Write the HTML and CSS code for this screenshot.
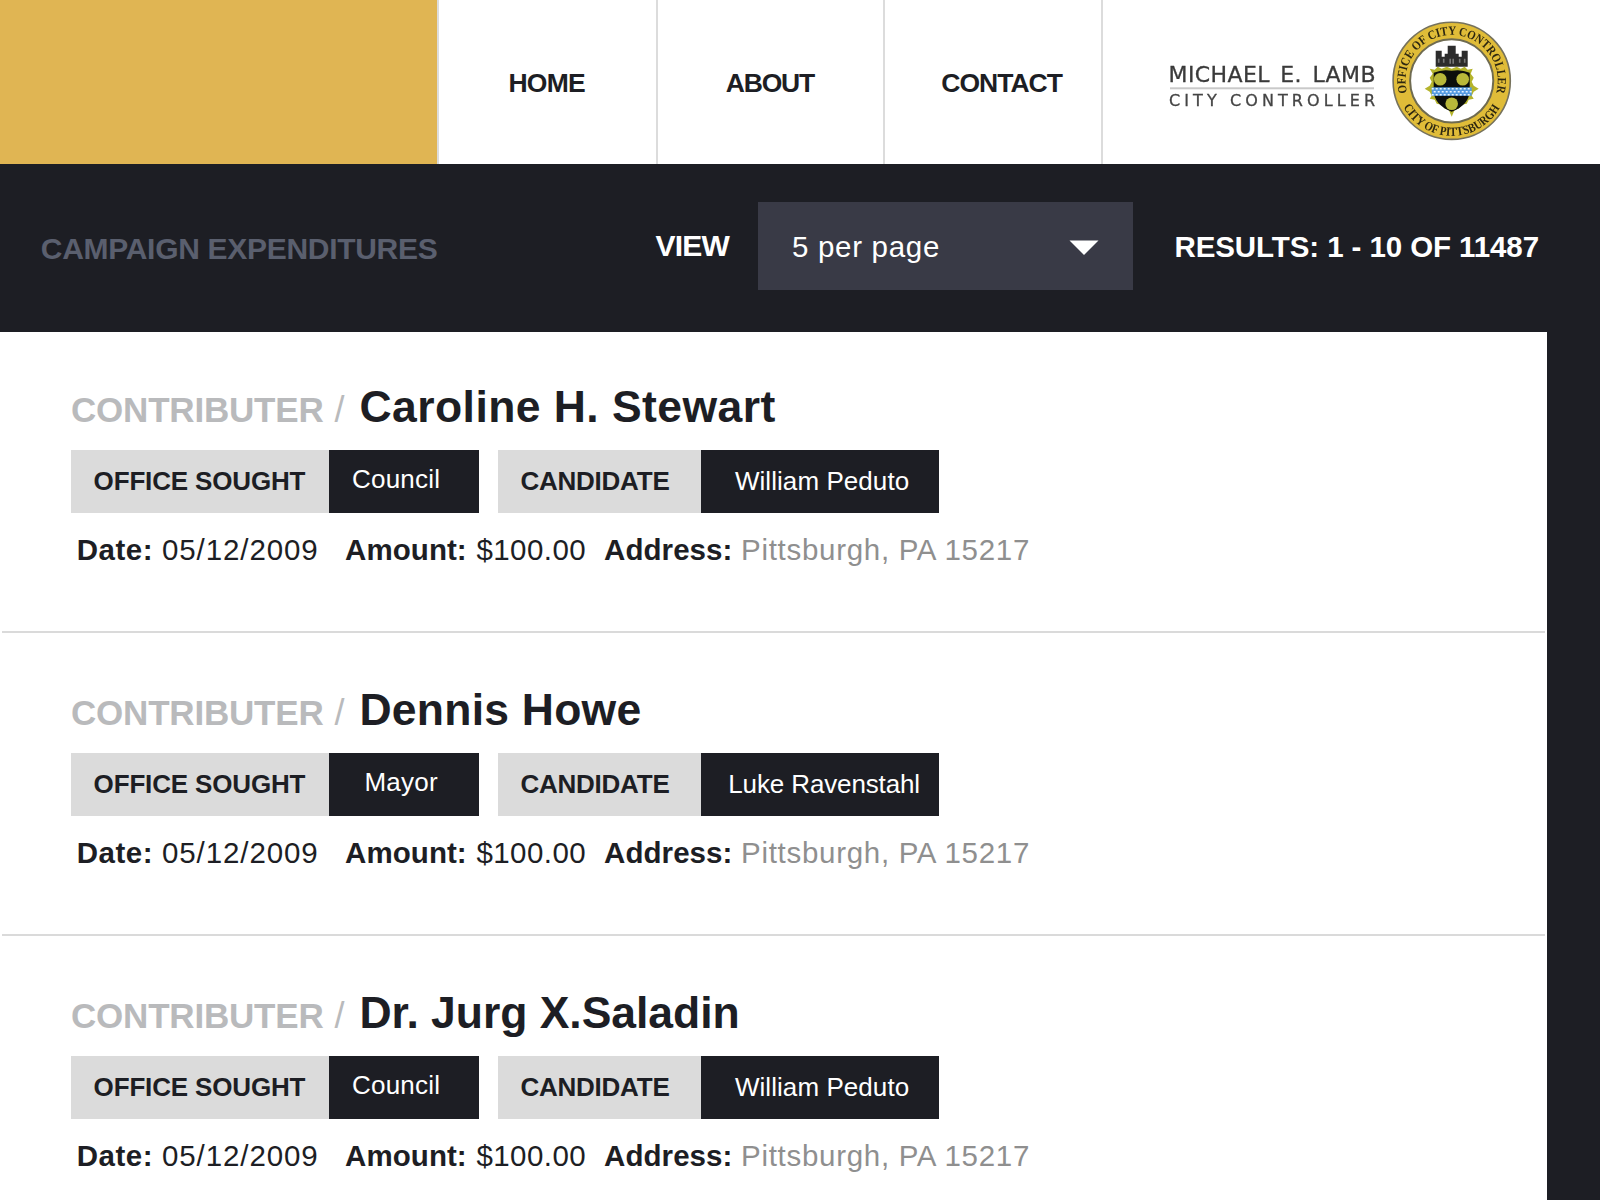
FILE: index.html
```html
<!DOCTYPE html>
<html lang="en">
<head>
<meta charset="utf-8">
<title>Campaign Expenditures</title>
<link rel="stylesheet" href="styles.css">
</head>
<body>
<header class="header">
  <div class="header-accent"></div>
  <nav class="nav">
    <a class="nav-item nav-home">HOME</a>
    <a class="nav-item nav-about">ABOUT</a>
    <a class="nav-item nav-contact">CONTACT</a>
  </nav>
  <div class="brand">
    <svg class="brand-logo" width="360" height="130" viewBox="0 0 360 130" role="img" aria-label="Michael E. Lamb, City Controller">
      <defs>
        <path id="arc-top" d="M 247.1 77.6 A 46.1 46.1 0 1 1 336.3 77.6"/>
        <path id="arc-bottom" d="M 243.300 92 A 55 55 0 0 0 340.100 92"/>
      </defs>
      <g class="brand-words">
        <text class="brand-name" x="8.5" y="67.2" textLength="207" lengthAdjust="spacing">MICHAEL E. LAMB</text>
        <rect x="10" y="72.300" width="204" height="2" fill="#c9c9c9"/>
        <text class="brand-role" x="9" y="91.200" textLength="206" lengthAdjust="spacing">CITY CONTROLLER</text>
      </g>
      <g class="brand-seal">
        <circle cx="291.700" cy="65.800" r="58.600" fill="#e0bc38" stroke="#76725c" stroke-width="1.600"/>
        <circle cx="291.700" cy="65.800" r="41.600" fill="#fff" stroke="#6f6b50" stroke-width="2"/>
        <text class="seal-text"><textPath href="#arc-top" textLength="168" lengthAdjust="spacingAndGlyphs">OFFICE OF CITY CONTROLLER</textPath></text>
        <text class="seal-text"><textPath href="#arc-bottom" textLength="117" lengthAdjust="spacingAndGlyphs">CITY OF PITTSBURGH</textPath></text>
        <g transform="translate(291.700 65.800)">
          <path d="M-16-30h6v6h3v-3h3v-8h8v8h3v3h3v-6h6v16h-32z" fill="#2c2c2c"/>
          <path d="M-8-18v-4M8-18v-4M-1.500-17v-5M1.500-17v-5M-13-18v-4M13-18v-4" stroke="#777" stroke-width="1.600"/>
          <path d="M-22-12l5 1 3-3 4 2 5-2 5 2 5-2 4 2 4-2 3 3 5-1-2 5 3 4-2 4 2 4 5 3-5 3-2 4 2 3-5 1-2 4-5 1-3 4-4 1-3 7-3-7-4-1-3-4-5-1-2-4-5-1 2-3-2-4-5-3 5-3 2-4-2-4 3-4z" fill="#b5b42c"/>
          <path d="M-18-8Q-9-12 0-10Q9-12 18-8V9Q18 24 0 31Q-18 24-18 9Z" fill="#0c0e0b"/>
          <circle cx="-11.500" cy="-1.500" r="6.300" fill="#b9b83a"/>
          <circle cx="11" cy="-1.500" r="6.300" fill="#b9b83a"/>
          <circle cx="0" cy="23" r="6.300" fill="#b9b83a"/>
          <rect x="-20" y="6.500" width="40" height="8.500" fill="#559be0"/>
          <path d="M-20 8h40M-18 11h38M-20 14h40" stroke="#e8f4ff" stroke-width="1.600" stroke-dasharray="2 2"/>
        </g>
      </g>
    </svg>
  </div>
</header>

<section class="toolbar">
  <h1 class="toolbar-title">CAMPAIGN EXPENDITURES</h1>
  <span class="toolbar-view">VIEW</span>
  <div class="select">
    <span class="select-value">5 per page</span>
    <svg class="select-arrow" width="30" height="15" viewBox="0 0 30 15"><path d="M.5.5h29L15 15z" fill="#fff"/></svg>
  </div>
  <span class="toolbar-results">RESULTS: 1 - 10 OF 11487</span>
</section>

<main class="list">
  <article class="record">
    <h2 class="record-head"><span class="record-kind">CONTRIBUTER</span><span class="record-slash">/</span><span class="record-name name-wide">Caroline H. Stewart</span></h2>
    <div class="chips">
      <div class="chip"><span class="chip-label label-office">OFFICE SOUGHT</span><span class="chip-value value-office">Council</span></div>
      <div class="chip"><span class="chip-label label-candidate">CANDIDATE</span><span class="chip-value value-candidate">William Peduto</span></div>
    </div>
    <dl class="meta">
      <dt class="meta-date-label">Date:</dt><dd class="meta-date">05/12/2009</dd>
      <dt class="meta-label">Amount:</dt><dd class="meta-amount">$100.00</dd>
      <dt class="meta-label">Address:</dt><dd class="meta-address">Pittsburgh, PA 15217</dd>
    </dl>
  </article>
  <article class="record">
    <h2 class="record-head"><span class="record-kind">CONTRIBUTER</span><span class="record-slash">/</span><span class="record-name name-medium">Dennis Howe</span></h2>
    <div class="chips">
      <div class="chip"><span class="chip-label label-office">OFFICE SOUGHT</span><span class="chip-value value-office value-mayor">Mayor</span></div>
      <div class="chip"><span class="chip-label label-candidate">CANDIDATE</span><span class="chip-value value-candidate value-long">Luke Ravenstahl</span></div>
    </div>
    <dl class="meta">
      <dt class="meta-date-label">Date:</dt><dd class="meta-date">05/12/2009</dd>
      <dt class="meta-label">Amount:</dt><dd class="meta-amount">$100.00</dd>
      <dt class="meta-label">Address:</dt><dd class="meta-address">Pittsburgh, PA 15217</dd>
    </dl>
  </article>
  <article class="record">
    <h2 class="record-head"><span class="record-kind">CONTRIBUTER</span><span class="record-slash">/</span><span class="record-name">Dr. Jurg X.Saladin</span></h2>
    <div class="chips">
      <div class="chip"><span class="chip-label label-office">OFFICE SOUGHT</span><span class="chip-value value-office">Council</span></div>
      <div class="chip"><span class="chip-label label-candidate">CANDIDATE</span><span class="chip-value value-candidate">William Peduto</span></div>
    </div>
    <dl class="meta">
      <dt class="meta-date-label">Date:</dt><dd class="meta-date">05/12/2009</dd>
      <dt class="meta-label">Amount:</dt><dd class="meta-amount">$100.00</dd>
      <dt class="meta-label">Address:</dt><dd class="meta-address">Pittsburgh, PA 15217</dd>
    </dl>
  </article>
</main>
</body>
</html>
```
FILE: styles.css
```css
* { box-sizing: border-box; }

body {
  margin: 0;
  height: 1200px;
  overflow: hidden;
  background: #1d1e24;
  color: #1d1e24;
  font-family: "Liberation Sans", Arial, Helvetica, sans-serif;
  white-space: nowrap;
}

h1, h2, dl, dt, dd { margin: 0; }

/* Header */
.header { display: flex; height: 164px; background: #fff; }
.header-accent { width: 437px; background: #e0b553; }
.nav { display: flex; }
.nav-item {
  padding-top: 68px;
  border-left: 2px solid #dcdcdc;
  font-size: 26.5px;
  font-weight: 700;
  line-height: 30px;
}
.nav-home { width: 219px; padding-left: 69.5px; letter-spacing: -0.8px; }
.nav-about { width: 227px; padding-left: 67.8px; letter-spacing: -1.2px; }
.nav-contact { width: 218px; padding-left: 56.3px; letter-spacing: -1px; }
.brand { flex: 1; padding: 15px 0 0 57px; border-left: 2px solid #dcdcdc; }
.brand-logo { display: block; }
.brand-words { filter: blur(0.7px); font-family: "DejaVu Sans", Verdana, sans-serif; }
.brand-name { font-size: 22px; fill: #3a3a3a; stroke: #3a3a3a; stroke-width: 0.3px; word-spacing: 3px; }
.brand-role { font-size: 16px; fill: #444; stroke: #444; stroke-width: 0.3px; }
.brand-seal { filter: blur(0.7px); }
.seal-text { font: 700 12.5px "Liberation Serif", serif; fill: #2d2710; }

/* Toolbar */
.toolbar {
  display: grid;
  grid-template-columns: 655.6px 102.4px 375px 1fr;
  align-items: start;
  height: 168px;
  color: #fff;
  font-weight: 700;
  line-height: 34px;
}
.toolbar-title {
  padding: 68px 0 0 40.8px;
  color: #5a5f6e;
  font-size: 30px;
  letter-spacing: -0.295px;
}
.toolbar-view { padding-top: 65px; font-size: 30px; letter-spacing: -0.8px; }
.select {
  display: flex;
  justify-content: space-between;
  height: 88px;
  margin-top: 38px;
  padding: 28px 33.5px 0 34px;
  background: #393a46;
  font-weight: 400;
}
.select-value { font-size: 29.5px; letter-spacing: 0.7px; }
.select-arrow { margin-top: 10px; }
.toolbar-results {
  padding: 66px 0 0 41.5px;
  font-size: 29.5px;
  letter-spacing: -0.091px;
}

/* Records */
.list { width: 1547px; height: 868px; overflow: hidden; background: #fff; }
.record {
  height: 303px;
  margin: 0 2px;
  padding: 52px 0 0 69px;
  border-bottom: 2px solid #dadada;
}
.record:first-child { height: 301px; padding-top: 50px; }
.record-head { display: flex; align-items: baseline; height: 50px; line-height: 50px; }
.record-kind {
  width: 263.5px;
  color: #b9babc;
  font-size: 35px;
  letter-spacing: -0.2px;
}
.record-slash { width: 25px; color: #b9babc; font-size: 36px; font-weight: 400; }
.record-name { font-size: 44.5px; letter-spacing: -0.04px; }
.name-wide { letter-spacing: 0.43px; }
.name-medium { letter-spacing: 0.224px; }

.chips { display: flex; gap: 19px; height: 63px; margin-top: 18px; }
.chip { display: flex; font-size: 26px; line-height: 62px; }
.chip-label { background: #dbdbdb; font-weight: 700; }
.chip-value { background: #1d1e24; color: #fff; }
.label-office { width: 258.4px; padding-left: 22.6px; letter-spacing: -0.158px; }
.value-office { width: 149.6px; padding-left: 22.6px; line-height: 58px; letter-spacing: 0.228px; }
.value-mayor { padding-left: 35px; }
.label-candidate { width: 203.5px; padding-left: 22.4px; letter-spacing: -0.229px; }
.value-candidate { width: 237.5px; padding-left: 33.4px; letter-spacing: 0.067px; }
.value-long { padding-left: 26.8px; letter-spacing: -0.13px; }

.meta {
  display: grid;
  grid-template-columns: 85.300px 183.100px 131.300px 127.700px 137px auto;
  justify-content: start;
  margin-top: 20px;
  padding-left: 5.7px;
  font-size: 29.5px;
  line-height: 34px;
}
.meta dt { font-weight: 700; }
.meta-date-label { letter-spacing: 0.55px; }
.meta-date { letter-spacing: 0.9px; }
.meta-label { letter-spacing: 0.06px; }
.meta-amount { letter-spacing: 0.45px; }
.meta-address { color: #8f8f8f; letter-spacing: 0.7px; }
```
